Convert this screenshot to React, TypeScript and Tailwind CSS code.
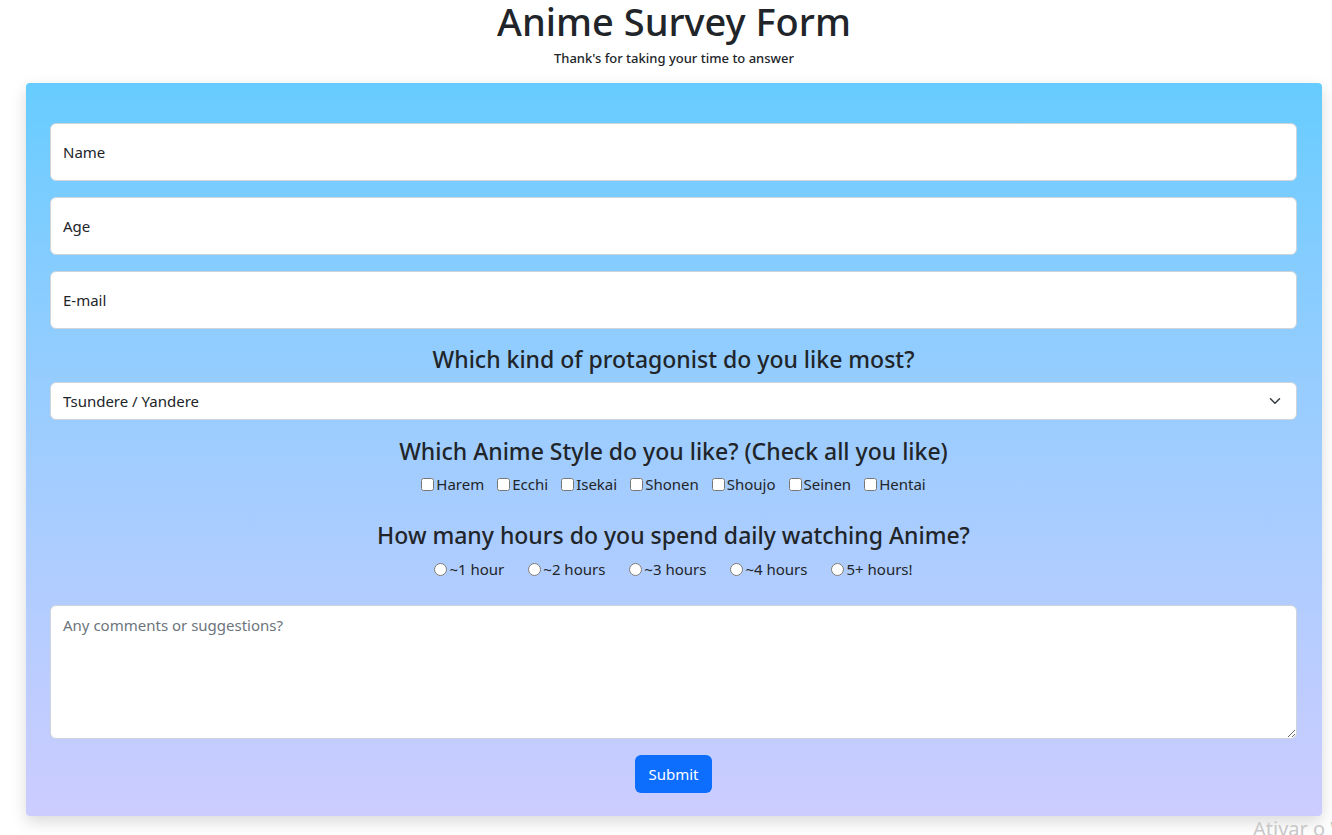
export default function App() {
  const styles = ["Harem", "Ecchi", "Isekai", "Shonen", "Shoujo", "Seinen", "Hentai"];
  const hours = ["~1 hour", "~2 hours", "~3 hours", "~4 hours", "5+ hours!"];

  return (
    <div className="relative min-h-[835px] w-full overflow-hidden bg-white font-['Noto_Sans',sans-serif] text-[#212529]">
      <div className="ml-[26px] mr-[10px]">
        <header className="text-center">
          <h1 className="text-[38px] leading-[42px] font-medium">Anime Survey Form</h1>
          <p className="mt-[6px] text-[13px] leading-[20px] font-medium">
            Thank's for taking your time to answer
          </p>
        </header>

        <form className="mt-[15px] rounded-[4px] bg-gradient-to-b from-[#66ccff] to-[#ccccff] pt-[40px] pr-[25px] pb-[23px] pl-[24px] shadow-[0_6px_16px_rgba(0,0,0,0.15)]">
          <div className="flex flex-col gap-4">
            <input
              type="text"
              placeholder="Name"
              className="h-[58px] w-full rounded-[6px] border border-[#ced4da] bg-white px-3 text-[15px] placeholder:text-[#212529] focus:outline-none"
            />
            <input
              type="text"
              placeholder="Age"
              className="h-[58px] w-full rounded-[6px] border border-[#ced4da] bg-white px-3 text-[15px] placeholder:text-[#212529] focus:outline-none"
            />
            <input
              type="text"
              placeholder="E-mail"
              className="h-[58px] w-full rounded-[6px] border border-[#ced4da] bg-white px-3 text-[15px] placeholder:text-[#212529] focus:outline-none"
            />
          </div>

          <h4 className="mt-[16px] mb-[8px] text-center text-[23px] leading-[29px] font-medium">
            Which kind of protagonist do you like most?
          </h4>
          <div className="relative">
            <select className="h-[38px] w-full appearance-none rounded-[6px] border border-[#ced4da] bg-white px-3 text-[15px] focus:outline-none">
              <option>Tsundere / Yandere</option>
              <option>Shonen hero</option>
              <option>Anti-hero</option>
            </select>
            <svg
              className="pointer-events-none absolute top-[13px] right-[15px]"
              width="14"
              height="12"
              viewBox="0 0 16 16"
            >
              <path
                d="M2 5l6 6 6-6"
                fill="none"
                stroke="#343a40"
                strokeWidth="2"
                strokeLinecap="round"
                strokeLinejoin="round"
              />
            </svg>
          </div>

          <h4 className="mt-[17px] text-center text-[23px] leading-[29px] font-medium">
            Which Anime Style do you like? (Check all you like)
          </h4>
          <div className="mt-[6px] flex h-[24px] items-center justify-center gap-[13px] text-[15px]">
            {styles.map((s) => (
              <label key={s} className="flex items-center">
                <input type="checkbox" className="m-0 mr-[2px] h-[13px] w-[13px]" />
                {s}
              </label>
            ))}
          </div>

          <h4 className="mt-[25px] text-center text-[23px] leading-[29px] font-medium">
            How many hours do you spend daily watching Anime?
          </h4>
          <div className="mt-[7px] flex h-[24px] items-center justify-center gap-[24px] text-[15px]">
            {hours.map((h) => (
              <label key={h} className="flex items-center">
                <input type="radio" name="hours" className="m-0 mr-[2px] h-[13px] w-[13px]" />
                {h}
              </label>
            ))}
          </div>

          <textarea
            placeholder="Any comments or suggestions?"
            className="mt-[24px] block h-[134px] w-full rounded-[6px] border border-[#ced4da] bg-white px-3 py-[8px] text-[15px] placeholder:text-[#6c757d] focus:outline-none"
          />

          <div className="mt-[16px] flex justify-center">
            <button
              type="button"
              className="h-[38px] rounded-[6px] bg-[#0d6efd] px-[13px] text-[15px] text-white"
            >
              Submit
            </button>
          </div>
        </form>
      </div>

      <div className="pointer-events-none absolute top-[814px] left-[1253px] text-[20px] whitespace-nowrap text-[#c8c8c8]">
        Ativar o Windows
      </div>
    </div>
  );
}
